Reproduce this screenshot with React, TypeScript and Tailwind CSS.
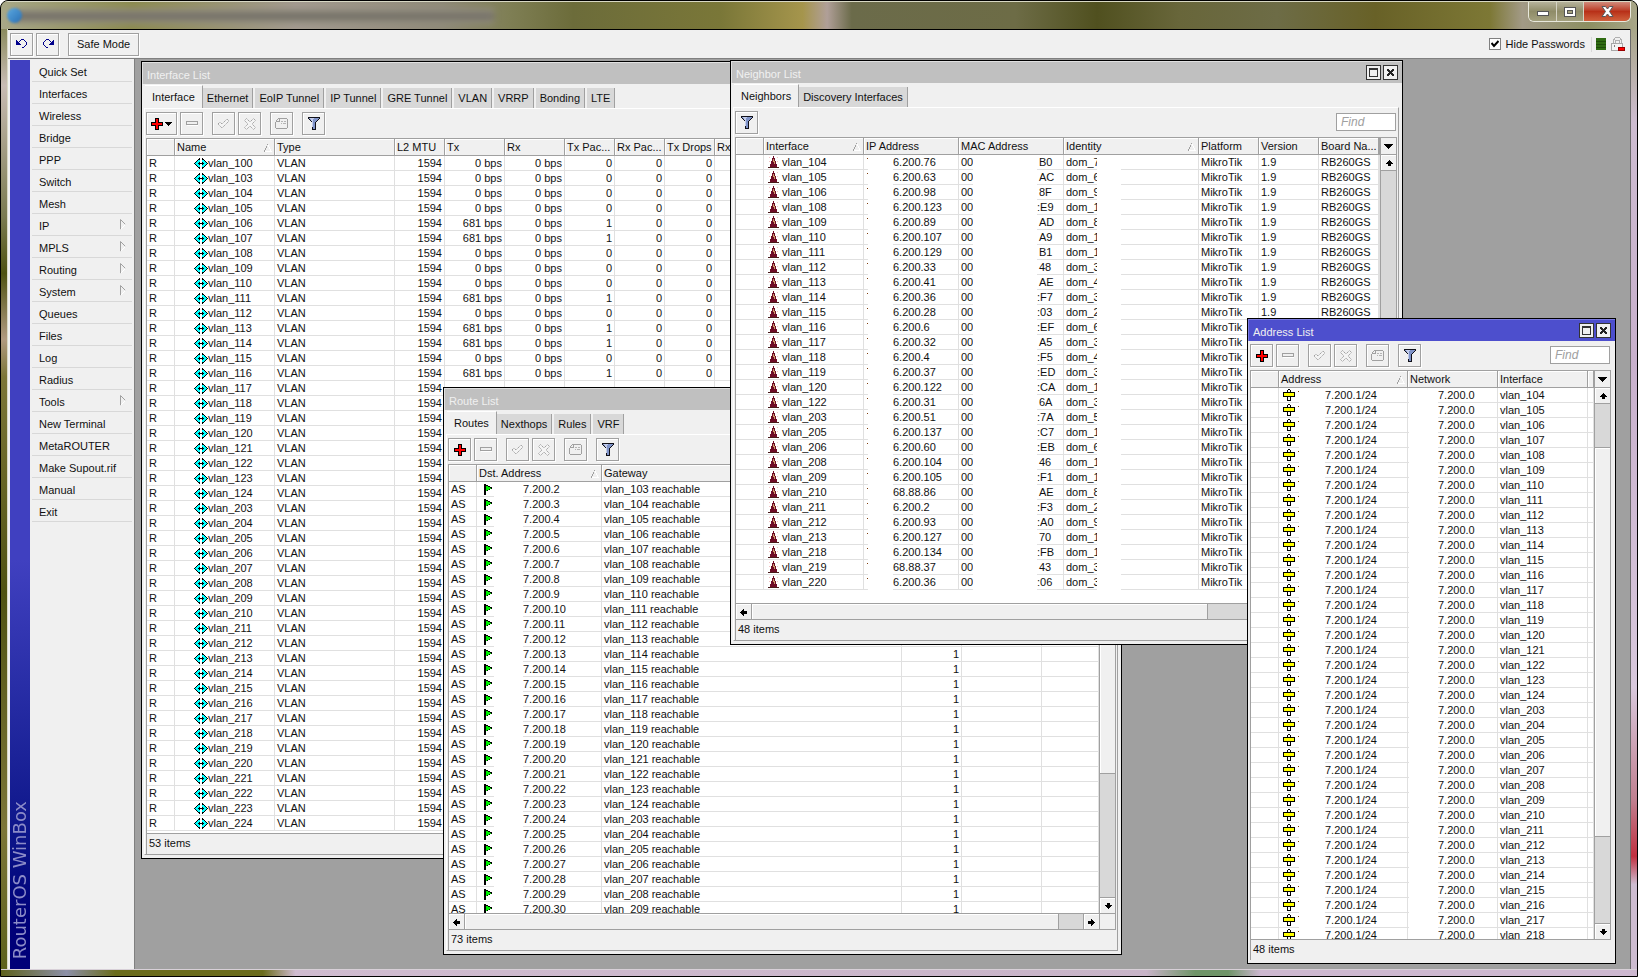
import React from 'react';

type Align = 'left' | 'right';

interface Column {
  title: string;
  width?: number;
  align?: Align;
  sort?: boolean;
}

const range = (from: number, to: number) =>
  Array.from({ length: to - from + 1 }, (_, i) => from + i);

const MENU = [
  { label: 'Quick Set' },
  { label: 'Interfaces' },
  { label: 'Wireless' },
  { label: 'Bridge' },
  { label: 'PPP' },
  { label: 'Switch' },
  { label: 'Mesh' },
  { label: 'IP', sub: true },
  { label: 'MPLS', sub: true },
  { label: 'Routing', sub: true },
  { label: 'System', sub: true },
  { label: 'Queues' },
  { label: 'Files' },
  { label: 'Log' },
  { label: 'Radius' },
  { label: 'Tools', sub: true },
  { label: 'New Terminal' },
  { label: 'MetaROUTER' },
  { label: 'Make Supout.rif' },
  { label: 'Manual' },
  { label: 'Exit' },
];

const INTERFACES = [100, ...range(103, 124), ...range(203, 224)];
const BUSY = [106, 107, 111, 113, 114, 116];
const ROUTES = [...range(103, 124), ...range(203, 209)];
const ADDRESSES = [...range(104, 124), ...range(203, 218)];

// vlan, ip tail, mac tail, identity
const NEIGHBORS: [number, string, string, string][] = [
  [104, '6.200.76', 'B0', 'dom_7'],
  [105, '6.200.63', 'AC', 'dom_6'],
  [106, '6.200.98', '8F', 'dom_9'],
  [108, '6.200.123', ':E9', 'dom_1'],
  [109, '6.200.89', 'AD', 'dom_8'],
  [110, '6.200.107', 'A9', 'dom_1'],
  [111, '6.200.129', 'B1', 'dom_1'],
  [112, '6.200.33', '48', 'dom_3'],
  [113, '6.200.41', 'AE', 'dom_4'],
  [114, '6.200.36', ':F7', 'dom_3'],
  [115, '6.200.28', ':03', 'dom_2'],
  [116, '6.200.6', ':EF', 'dom_6'],
  [117, '6.200.32', 'A5', 'dom_3'],
  [118, '6.200.4', ':F5', 'dom_4'],
  [119, '6.200.37', ':ED', 'dom_3'],
  [120, '6.200.122', ':CA', 'dom_1'],
  [122, '6.200.31', '6A', 'dom_3'],
  [203, '6.200.51', ':7A', 'dom_5'],
  [205, '6.200.137', ':C7', 'dom_1'],
  [206, '6.200.60', ':EB', 'dom_6'],
  [208, '6.200.104', '46', 'dom_1'],
  [209, '6.200.105', ':F1', 'dom_1'],
  [210, '68.88.86', 'AE', 'dom_8'],
  [211, '6.200.2', ':F3', 'dom_2'],
  [212, '6.200.93', ':A0', 'dom_9'],
  [213, '6.200.127', '70', 'dom_1'],
  [218, '6.200.134', ':FB', 'dom_1'],
  [219, '68.88.37', '43', 'dom_3'],
  [220, '6.200.36', ':06', 'dom_3'],
];

/* ---------- icons ---------- */

const svgProps = { shapeRendering: 'crispEdges' as const, 'aria-hidden': true, className: 'block shrink-0' };

const UndoIcon = ({ flip = false }: { flip?: boolean }) => (
  <svg {...svgProps} width="12" height="10" viewBox="0 0 12 10" className={flip ? 'block -scale-x-100' : 'block'}>
    <path d="M0 1h1v5h-1zM1 2h1v4h-1zM2 3h1v3h-1zM3 4h1v2h-1zM4 5h1v1h-1zM3 2h1v1h-1zM4 1h1v1h-1zM5 0h3v1h-3zM8 1h1v1h-1zM9 2h1v1h-1zM10 3h1v3h-1zM9 6h1v1h-1zM8 7h1v1h-1zM6 8h2v1h-2z" fill="#00008b" />
  </svg>
);

const PlusIcon = () => (
  <svg {...svgProps} width="12" height="12" viewBox="0 0 12 12">
    <path d="M4 0h4v4h4v4h-4v4h-4v-4h-4v-4h4z" fill="#000" />
    <path d="M5 1h2v4h4v2h-4v4h-2v-4h-4v-2h4z" fill="#f00" />
  </svg>
);

const MinusIcon = () => (
  <svg {...svgProps} width="12" height="5" viewBox="0 0 12 5">
    <rect x="0.5" y="0.5" width="11" height="3" fill="#f0f0f0" stroke="#a0a0a0" />
    <path d="M1 4h11v1h-11z" fill="#fff" />
  </svg>
);

const CheckIcon = () => (
  <svg width="13" height="11" viewBox="0 0 13 11" aria-hidden="true">
    <path d="M1 6l2-2 2 2 5-5 2 2-7 7z" fill="#f4f4f4" stroke="#a0a0a0" strokeDasharray="1.4 0.7" />
  </svg>
);

const CrossIcon = () => (
  <svg width="12" height="12" viewBox="0 0 12 12" aria-hidden="true">
    <path d="M2.500 0.500l3.500 3.500 3.500-3.500 2 2-3.500 3.500 3.500 3.500-2 2-3.500-3.500-3.500 3.500-2-2 3.500-3.500-3.500-3.500z" fill="#f4f4f4" stroke="#a0a0a0" strokeDasharray="1.400 0.700" />
  </svg>
);

const NoteIcon = () => (
  <svg {...svgProps} width="13" height="11" viewBox="0 0 13 11">
    <path d="M4 0h8v1h-8zM12 1h1v9h-1zM1 10h11v1h-11zM0 4h1v6h-1zM1 3h3v1h-3zM4 1h1v3h-1zM1 2h1v1h-1zM2 1h1v1h-1zM3 0h1v1h-1z" fill="#a0a0a0" />
    <path d="M6 3h2v1h-2zM9 3h2v1h-2zM6 5h1v1h-1zM8 5h3v1h-3z" fill="#b4b4b4" />
  </svg>
);

const FilterIcon = () => (
  <svg {...svgProps} width="12" height="13" viewBox="0 0 12 13">
    <path d="M0 0h12v2h-1v1h-1v1h-1v1h-1v8h-4v-8h-1v-1h-1v-1h-1v-1h-1z" fill="#101018" />
    <path d="M1 1h10v1h-1v1h-1v1h-1v1h-1v7h-2v-7h-1v-1h-1v-1h-1v-1h-1z" fill="#7f93c8" />
    <path d="M2 1h4v1h-1v8h-1v-6h-1v-2h-1z" fill="#c3cdeb" />
  </svg>
);

const VlanIcon = () => (
  <svg {...svgProps} width="14" height="11" viewBox="0 0 14 11">
    <path d="M5 0h1v11h-1v-1h-1v-1h-1v-1h-1v-1h-1v-1h-1v-1h1v-1h1v-1h1v-1h1v-1h1z" fill="#000" />
    <path d="M9 0h-1v11h1v-1h1v-1h1v-1h1v-1h1v-1h1v-1h-1v-1h-1v-1h-1v-1h-1v-1h-1z" fill="#000" />
    <path d="M5 2v7h-1v-1h-1v-1h-1v-1h-1v-1h1v-1h1v-1h1v-1zM9 2v7h1v-1h1v-1h1v-1h1v-1h-1v-1h-1v-1h-1v-1z" fill="#0ff" />
    <path d="M5 2h1v2h-1zM5 7h1v2h-1zM8 2h1v2h-1zM8 7h1v2h-1z" fill="#0ff" />
    <path d="M4 5h6v1h-6z" fill="#000" />
  </svg>
);

const NeighborIcon = () => (
  <svg {...svgProps} width="11" height="12" viewBox="0 0 11 12">
    <path d="M5 0h1v2h1v3h1v3h1v3h-7v-3h1v-3h1v-3h1z" fill="#6e0b26" />
    <path d="M0 11h11v1h-11z" fill="#4a1a1a" />
    <path d="M5 3h1v3h-1zM6 5h1v3h-1z" fill="#d09a6a" />
    <path d="M1 1h1v1h-1zM9 1h1v1h-1zM1 5h1v1h-1zM9 5h1v1h-1z" fill="#f3c4c4" />
  </svg>
);

const FlagIcon = () => (
  <svg {...svgProps} width="8" height="11" viewBox="0 0 8 11">
    <path d="M0 0h2v1h2v1h2v1h2v2h-2v1h-2v1h-2v4h-2z" fill="#000" />
    <path d="M2 2h1v1h2v1h2v1h-2v1h-2v1h-1z" fill="#00f000" />
    <path d="M2 2h2v1h-2zM2 3h4v2h-4zM2 5h2v1h-2z" fill="#00f000" />
  </svg>
);

const AddressIcon = () => (
  <svg {...svgProps} width="12" height="12" viewBox="0 0 12 12">
    <path d="M5 0h2v1h1v2h4v5h-4v4h-4v-4h-4v-5h4v-2h1z" fill="#000" />
    <path d="M1 4h10v3h-10z" fill="#ff0" />
    <path d="M5 1h2v2h-2zM5 8h2v3h-2z" fill="#fff" />
  </svg>
);

const ARROWS = {
  up: 'M4 0h1v1h1v1h1v1h1v1h-2v2h-3v-2h-2v-1h1v-1h1v-1h1z',
  down: 'M3 0h3v2h2v1h-1v1h-1v1h-1v1h-1v-1h-1v-1h-1v-1h-1v-1h2z',
  left: 'M0 3h1v-1h1v-1h1v-1h1v2h3v3h-3v2h-1v-1h-1v-1h-1v-1h-1z',
  right: 'M7 3h-1v-1h-1v-1h-1v-1h-1v2h-3v3h3v2h1v-1h1v-1h1v-1h1z',
  menu: 'M0 1h9v1h-1v1h-1v1h-1v1h-1v1h-1v-1h-1v-1h-1v-1h-1v-1h-1z',
};

const Arrow = ({ dir }: { dir: keyof typeof ARROWS }) => (
  <svg {...svgProps} width="9" height="7" viewBox="0 0 9 7">
    <path d={ARROWS[dir]} fill="#000" />
  </svg>
);

/* ---------- shared controls ---------- */

const ToolButton: React.FC<{ label: string; wide?: boolean; className?: string; children: React.ReactNode }> = ({
  label,
  wide,
  className = '',
  children,
}) => (
  <button
    type="button"
    aria-label={label}
    className={`flex h-[23px] shrink-0 items-center justify-center border border-[#a0a0a0] bg-[#f0f0f0] shadow-[1px_1px_0_#fff,inset_1px_1px_0_#fff] ${wide ? 'w-[31px]' : 'w-[23px]'} ${className}`}
  >
    {children}
  </button>
);

const Toolbar: React.FC<{ edit?: boolean; menu?: boolean; find?: string }> = ({ edit, menu, find }) => (
  <div className="flex h-[29px] shrink-0 items-start pt-[3px]">
    {edit && (
      <>
        <ToolButton label="Add" wide={menu} className="mr-[3px]">
          <PlusIcon />
          {menu && (
            <svg {...svgProps} width="9" height="4" viewBox="0 0 9 4">
              <path d="M2 0h7v1h-1v1h-1v1h-1v1h-1v-1h-1v-1h-1v-1h-1z" fill="#000" />
            </svg>
          )}
        </ToolButton>
        <ToolButton label="Remove" className="mr-[9px]"><MinusIcon /></ToolButton>
        <ToolButton label="Enable" className="mr-[3px]"><CheckIcon /></ToolButton>
        <ToolButton label="Disable" className="mr-[9px]"><CrossIcon /></ToolButton>
        <ToolButton label="Comment" className="mr-[9px]"><NoteIcon /></ToolButton>
      </>
    )}
    <ToolButton label="Filter"><FilterIcon /></ToolButton>
    {find && (
      <input
        type="text"
        aria-label={find}
        placeholder="Find"
        className="mt-[2px] mr-px ml-auto h-[18px] w-[60px] border border-[#a0a0a0] bg-white px-1 text-[12px] italic outline-none placeholder:text-[#a0a0a0]"
      />
    )}
  </div>
);

const Tabs: React.FC<{ items: string[] }> = ({ items }) => (
  <div className="flex h-[24px] shrink-0 items-end gap-[2px] pl-[3px]">
    {items.map((tab, i) => (
      <button
        key={tab}
        type="button"
        className={
          i === 0
            ? '-mr-[2px] flex h-[23px] items-start border-t border-r border-t-white border-r-[#a0a0a0] bg-[#f0f0f0] px-[7px] pt-px leading-[20px]'
            : 'h-[20px] border-r border-[#a0a0a0] bg-[#d8d8d8] px-[4px] pt-px leading-[19px]'
        }
      >
        {tab}
      </button>
    ))}
  </div>
);

const ScrollButton: React.FC<{ dir: 'up' | 'down' | 'left' | 'right' }> = ({ dir }) => (
  <button
    type="button"
    aria-label={`Scroll ${dir}`}
    className="flex size-[15px] shrink-0 items-center justify-center bg-[#f0f0f0] pt-[2px] pl-px shadow-[inset_1px_1px_0_#fff]"
  >
    <Arrow dir={dir} />
  </button>
);

/* Vertical bar: the gap before the thumb and the thumb itself are given in pixels */
const VScroll: React.FC<{ before: number; thumb: number }> = ({ before, thumb }) => (
  <div className="flex w-[17px] shrink-0 flex-col border-x border-[#a0a0a0] bg-[#d8d8d8]">
    <button type="button" aria-label="Columns" className="flex h-[17px] shrink-0 items-center justify-center border-b border-[#a0a0a0] bg-[#f0f0f0]">
      <Arrow dir="menu" />
    </button>
    <ScrollButton dir="up" />
    <div className="min-h-0 flex-1 border-y border-[#a0a0a0]">
      <div style={{ height: before }} />
      {thumb > 0 && (
        <div className="border-y border-[#a0a0a0] bg-[#f0f0f0] shadow-[inset_1px_1px_0_#fff]" style={{ height: thumb }} />
      )}
    </div>
    <ScrollButton dir="down" />
  </div>
);

const HScroll: React.FC<{ thumb: number; corner?: boolean }> = ({ thumb, corner }) => (
  <div className="flex h-[16px] shrink-0 border-t border-r border-[#a0a0a0] bg-[#d8d8d8]">
    <ScrollButton dir="left" />
    <div className="min-w-0 flex-1 border-x border-[#a0a0a0]">
      <div className="h-full border-r border-[#a0a0a0] bg-[#f0f0f0] shadow-[inset_1px_1px_0_#fff]" style={{ width: thumb }} />
    </div>
    <ScrollButton dir="right" />
    {corner && <div className="w-[16px] border-l border-[#a0a0a0] bg-[#f0f0f0]" />}
  </div>
);

const Grid: React.FC<{ columns: Column[]; rows: React.ReactNode[][]; children?: React.ReactNode }> = ({
  columns,
  rows,
  children,
}) => (
  <div className="relative min-w-0 flex-1 overflow-hidden bg-white">
    <table className="w-full table-fixed border-separate border-spacing-0">
      <colgroup>
        {columns.map((c, i) => (
          <col key={i} style={c.width ? { width: c.width } : undefined} />
        ))}
      </colgroup>
      <thead>
        <tr className="h-[17px]">
          {columns.map((c, i) => (
            <th key={i} className="border-r border-b border-[#a0a0a0] bg-[#f0f0f0] p-0 text-left font-normal shadow-[inset_1px_1px_0_#fff]">
              <div className="flex h-[16px] items-center justify-between overflow-hidden px-[2px] pt-px leading-[15px] whitespace-nowrap">
                {c.title}
                {c.sort && (
                  <svg {...svgProps} width="8" height="8" viewBox="0 0 8 8">
                    <path d="M3 0h1v1h-1zM2 2h1v2h-1zM1 4h1v2h-1zM0 6h1v2h-1z" fill="#a0a0a0" />
                    <path d="M4 1h1v2h-1zM5 3h1v2h-1zM6 5h1v2h-1zM1 7h7v1h-7z" fill="#fff" />
                  </svg>
                )}
              </div>
            </th>
          ))}
        </tr>
      </thead>
      <tbody>
        {rows.map((cells, r) => (
          <tr key={r} className="h-[15px]">
            {columns.map((c, i) => (
              <td key={i} className="border-r border-b border-[#e0e0e0] p-0">
                <div
                  className={`flex h-[14px] items-center overflow-hidden px-[2px] leading-[14px] whitespace-pre ${c.align === 'right' ? 'justify-end' : ''}`}
                >
                  {cells[i]}
                </div>
              </td>
            ))}
          </tr>
        ))}
      </tbody>
    </table>
    {children}
  </div>
);

const Window: React.FC<{
  title: string;
  className: string;
  active?: boolean;
  tabs?: string[];
  buttons?: boolean;
  items: number;
  children: React.ReactNode;
}> = ({ title, className, active, tabs, buttons, items, children }) => (
  <section className={`absolute flex flex-col border border-black bg-[#f0f0f0] ${className}`}>
    <header
      className={`flex h-[22px] shrink-0 items-center justify-between border-t border-l pr-[4px] pl-1 text-[#f0f0f0] ${
        active ? 'border-[#7a7ae0] bg-[#4d4fcd]' : 'border-[#e0e0e0] bg-[#c0c0c0]'
      }`}
    >
      <h2 className="pt-[3px]">{title}</h2>
      {buttons && (
        <div className="flex gap-[2px]">
          <button type="button" aria-label={`Maximize ${title}`} className="flex size-[15px] items-center justify-center border border-[#333] bg-[#f0f0f0]">
            <span className="size-[9px] border border-t-2 border-[#333]" />
          </button>
          <button type="button" aria-label={`Close ${title}`} className="flex size-[15px] items-center justify-center border border-[#333] bg-[#f0f0f0]">
            <svg {...svgProps} width="7" height="7" viewBox="0 0 7 7">
              <path d="M0 0h2v1h1v1h1v-1h1v-1h2v2h-1v1h-1v1h1v1h1v2h-2v-1h-1v-1h-1v1h-1v1h-2v-2h1v-1h1v-1h-1v-1h-1z" fill="#222" />
            </svg>
          </button>
        </div>
      )}
    </header>
    {tabs && <Tabs items={tabs} />}
    <div
      className={`flex min-h-0 flex-1 flex-col ${
        tabs ? 'mr-[3px] mb-[3px] ml-[2px] border border-t-white border-r-[#a0a0a0] border-b-[#a0a0a0] border-l-white px-px' : 'mr-[4px] mb-[3px] ml-[2px]'
      }`}
    >
      {children}
      <footer className="h-[20px] shrink-0 border-l border-[#a0a0a0] pl-[2px] leading-[19px]">{items} items</footer>
    </div>
  </section>
);

/* ---------- windows ---------- */

const InterfaceList = () => (
  <Window
    title="Interface List"
    className="top-[2px] left-[6px] h-[798px] w-[900px]"
    tabs={['Interface', 'Ethernet', 'EoIP Tunnel', 'IP Tunnel', 'GRE Tunnel', 'VLAN', 'VRRP', 'Bonding', 'LTE']}
    items={53}
  >
    <Toolbar edit menu />
    <div className="flex min-h-0 flex-1 border-y border-l border-[#a0a0a0]">
      <Grid
        columns={[
          { title: '', width: 28 },
          { title: 'Name', width: 100, sort: true },
          { title: 'Type', width: 120 },
          { title: 'L2 MTU', width: 50, align: 'right' },
          { title: 'Tx', width: 60, align: 'right' },
          { title: 'Rx', width: 60, align: 'right' },
          { title: 'Tx Pac...', width: 50, align: 'right' },
          { title: 'Rx Pac...', width: 50, align: 'right' },
          { title: 'Tx Drops', width: 50, align: 'right' },
          { title: 'Rx' },
        ]}
        rows={INTERFACES.map((n) => {
          const busy = BUSY.includes(n);
          const traffic = [busy ? '681 bps' : '0 bps', '0 bps', busy ? '1' : '0', '0', '0'];
          return [
            'R',
            <span className="flex items-center pl-[17px]"><VlanIcon />{`vlan_${n}`}</span>,
            'VLAN',
            '1594',
            ...(n < 117 ? traffic : []),
          ];
        })}
      />
    </div>
  </Window>
);

const RouteList = () => (
  <Window
    title="Route List"
    className="top-[328px] left-[308px] h-[568px] w-[679px]"
    tabs={['Routes', 'Nexthops', 'Rules', 'VRF']}
    items={73}
  >
    <Toolbar edit />
    <div className="flex min-h-0 flex-1 flex-col border-y border-l border-[#a0a0a0]">
      <div className="flex min-h-0 flex-1">
        <Grid
          columns={[
            { title: '', width: 28 },
            { title: 'Dst. Address', width: 125, sort: true },
            { title: 'Gateway', width: 300 },
            { title: '', width: 60, align: 'right' },
            { title: '', width: 80 },
            { title: '' },
          ]}
          rows={ROUTES.map((n, i) => [
            'AS',
            <span className="flex items-center gap-[31px] pl-[5px]"><FlagIcon />{`7.200.${i + 2}`}</span>,
            `vlan_${n} reachable`,
            n > 113 ? '1' : '',
          ])}
        >
          <div className="absolute top-[17px] bottom-0 left-[45px] w-[29px] bg-white" />
        </Grid>
        <VScroll before={0} thumb={276} />
      </div>
      <HScroll thumb={594} corner />
    </div>
  </Window>
);

const NeighborList = () => (
  <Window
    title="Neighbor List"
    className="top-[1px] left-[595px] h-[585px] w-[673px]"
    tabs={['Neighbors', 'Discovery Interfaces']}
    items={48}
    buttons
  >
    <Toolbar find="Find neighbor" />
    <div className="flex min-h-0 flex-1 flex-col border-y border-l border-[#a0a0a0]">
      <div className="flex min-h-0 flex-1">
        <Grid
          columns={[
            { title: '', width: 28 },
            { title: 'Interface', width: 100, sort: true },
            { title: 'IP Address', width: 95 },
            { title: 'MAC Address', width: 105 },
            { title: 'Identity', width: 135, sort: true },
            { title: 'Platform', width: 60 },
            { title: 'Version', width: 60 },
            { title: 'Board Na...', width: 60 },
            { title: '' },
          ]}
          rows={NEIGHBORS.map(([n, ip, mac, identity], i) => [
            '',
            <span className="flex items-center gap-[3px] pl-[2px]"><NeighborIcon />{`vlan_${n}`}</span>,
            <span className="flex items-center gap-[25px] pl-px"><i className="mb-[7px] size-px bg-[#804010]" />{ip}</span>,
            <span className="flex">
              <span className="w-[12px]">00</span>
              <span className={mac.startsWith(':') ? 'pl-[64px]' : 'pl-[66px]'}>{mac}</span>
            </span>,
            <span className="w-[31px] overflow-hidden">{identity}</span>,
            'MikroTik',
            i < 11 ? '1.9' : '',
            i < 11 ? 'RB260GS' : '',
          ])}
        >
          <div className="absolute top-[17px] bottom-0 left-[132px] w-[25px] bg-white" />
          <div className="absolute top-[17px] bottom-0 left-[237px] w-[64px] bg-white" />
          <div className="absolute top-[17px] bottom-0 left-[361px] w-[24px] bg-white" />
        </Grid>
        <VScroll before={600} thumb={0} />
      </div>
      <HScroll thumb={456} />
    </div>
  </Window>
);

const AddressList = () => (
  <Window title="Address List" className="top-[259px] left-[1112px] h-[646px] w-[369px]" active buttons items={48}>
    <Toolbar edit find="Find address" />
    <div className="flex min-h-0 flex-1 border-y border-l border-[#a0a0a0]">
      <Grid
        columns={[
          { title: '', width: 28 },
          { title: 'Address', width: 129, sort: true },
          { title: 'Network', width: 90 },
          { title: 'Interface', width: 90 },
          { title: '' },
        ]}
        rows={ADDRESSES.map((n) => [
          '',
          <span className="flex items-center gap-[3px] pl-[2px]">
            <AddressIcon />
            <i className="mb-[7px] size-px bg-[#804010]" />
            <span className="pl-[23px]">7.200.1/24</span>
          </span>,
          <span className="pl-[28px]">7.200.0</span>,
          `vlan_${n}`,
        ])}
      >
        <div className="absolute top-[17px] bottom-0 left-[48px] w-[26px] bg-white" />
        <div className="absolute top-[17px] bottom-0 left-[158px] w-[29px] bg-white" />
      </Grid>
      <VScroll before={43} thumb={390} />
    </div>
  </Window>
);

const Sidebar = () => (
  <aside className="flex w-[127px] shrink-0 border-r border-[#808080] bg-[#f0f0f0] pt-px pl-[2px]">
    <div className="flex w-[20px] items-end justify-center bg-linear-to-b from-[#4040c0] from-55% to-[#000078] to-95% pb-[10px]">
      <span className="rotate-180 [writing-mode:vertical-rl] font-['DejaVu_Sans'] text-[18px] leading-[20px] whitespace-nowrap text-[#8c8cc8]">
        RouterOS WinBox
      </span>
    </div>
    <nav className="ml-[2px] w-[100px]">
      {MENU.map((item) => (
        <a key={item.label} href="#" className="flex h-[22px] items-center justify-between border-b border-[#d8d8d8] pt-[4px] pr-[6px] pl-[7px] whitespace-nowrap">
          {item.label}
          {item.sub && (
            <svg width="6" height="11" viewBox="0 0 6 11" aria-hidden="true" className="mb-[5px]">
              <path d="M0.500 10.500v-10l5 5" fill="none" stroke="#a0a0a0" />
              <path d="M0.500 10.500l5-5" stroke="#fff" />
            </svg>
          )}
        </a>
      ))}
    </nav>
  </aside>
);

const TitleBar = () => (
  <div className="flex h-[28px] shrink-0 justify-between overflow-hidden border-t border-[#d8d8c4] bg-[linear-gradient(90deg,#a8a888_0%,#8c8b50_8%,#a39a90_18%,#8f8a78_27%,#7f7f55_31%,#6c6c3a_35%,#7a7738_44%,#a5954c_49%,#b09f98_50.5%,#6b6b4a_52%,#6d6c46_62%,#50501f_67%,#68663a_72%,#6d6c46_78%,#686127_84%,#7d7835_91%,#a29a86_93%,#8d8f62_97%,#a8a688_100%)] pl-[6px]">
    <div className="flex items-center">
      <span className="z-10 size-[15px] rounded-full bg-linear-to-br from-[#5ba8e0] to-[#2a70b4] blur-[1px]" />
      <span className="-ml-[8px] h-[14px] w-[480px] bg-linear-to-b from-[#a09b8c] via-[#6a665e] to-[#9c9788] blur-[3px]" />
    </div>
    <div className="mr-[6px] flex h-[20px] overflow-hidden rounded-b-md border border-t-0 border-[#e8e8dc]">
      <button type="button" aria-label="Minimize" className="flex w-[28px] items-center justify-center border-r border-[#d5d3c4] bg-linear-to-b from-[#b5b29a] via-[#8f8c68] to-[#a3a07e]">
        <span className="mt-1 h-[5px] w-[12px] border border-[#555] bg-white" />
      </button>
      <button type="button" aria-label="Restore" className="flex w-[27px] items-center justify-center border-r border-[#d5d3c4] bg-linear-to-b from-[#b5b29a] via-[#8f8c68] to-[#a3a07e]">
        <span className="flex h-[10px] w-[12px] items-center justify-center border border-[#555] bg-white">
          <span className="h-[4px] w-[6px] border border-[#555] bg-[#a3a07e]" />
        </span>
      </button>
      <button type="button" aria-label="Close" className="flex w-[46px] items-center justify-center bg-linear-to-b from-[#d08a7a] via-[#b83018] to-[#d0603c]">
        <svg width="13" height="11" viewBox="0 0 13 11" aria-hidden="true">
          <path d="M1 0.500h3.500l2 2.500 2-2.500h3.500l-3.500 5 3.500 5h-3.500l-2-2.500-2 2.500h-3.500l3.500-5z" fill="#fff" stroke="#55585c" />
        </svg>
      </button>
    </div>
  </div>
);

const App: React.FC = () => {
  return (
    <div className="flex h-screen flex-col overflow-hidden rounded-t-lg border border-black bg-[#565a20] font-['Liberation_Sans',Arial,sans-serif] text-[11px] text-[#111]">
      <TitleBar />

      <div className="flex min-h-0 flex-1">
        {/* Left glass edge */}
        <div className="w-[7px] shrink-0 border-r border-[#d8d8c4] bg-[linear-gradient(180deg,#8a8a5e_0%,#c8bcb4_6%,#7a7a50_20%,#4f5212_26%,#b09a80_33%,#7c7638_37%,#4f5212_60%,#7c7638_85%,#5d611c_100%)]" />

        <div className="flex min-w-0 flex-1 flex-col border-t border-black bg-[#a0a0a0]">
          {/* Main toolbar */}
          <div className="flex h-[29px] shrink-0 items-center border-b border-[#808080] bg-[#f0f0f0] pr-[5px] pl-[2px]">
            <ToolButton label="Undo" className="mr-[3px]"><UndoIcon /></ToolButton>
            <ToolButton label="Redo" className="mr-[9px]"><UndoIcon flip /></ToolButton>
            <button type="button" className="h-[23px] border border-[#a0a0a0] px-[8px] leading-[21px] shadow-[1px_1px_0_#fff,inset_1px_1px_0_#fff]">
              Safe Mode
            </button>
            <label className="ml-auto flex items-center gap-[5px]">
              <span className="relative flex size-[12px]">
                <input type="checkbox" defaultChecked className="peer size-[12px] appearance-none border border-[#808080] bg-white" />
                <svg width="8" height="8" viewBox="0 0 8 8" aria-hidden="true" className="pointer-events-none absolute top-[2px] left-[2px] hidden peer-checked:block">
                  <path d="M0.500 3l2.500 3 4.500-5" fill="none" stroke="#000" strokeWidth="2" />
                </svg>
              </span>
              Hide Passwords
            </label>
            <div className="ml-[6px] flex items-center gap-[5px] border-l border-[#d8d8d8] pl-1">
              <svg {...svgProps} width="10" height="12" viewBox="0 0 10 12">
                <path d="M0 0h10v12h-10z" fill="#2f6b12" />
                <path d="M0 3h10v1h-10zM0 6h10v1h-10zM0 9h10v1h-10z" fill="#1f4d0a" />
              </svg>
              <svg {...svgProps} width="14" height="15" viewBox="0 0 14 15">
                <path d="M2.500 6v-3l2-2.500h4l2 2.500v3M4.500 6v-3h4v3" fill="none" stroke="#b0b0b0" />
                <path d="M0.500 6.500h11v7h-11z" fill="#f4f4f4" stroke="#a8a8a8" />
                <path d="M3 8h1v2h-1z" fill="#808080" />
                <path d="M7 10h6v3h-6z" fill="#f00" stroke="#900" />
              </svg>
            </div>
          </div>

          <div className="flex min-h-0 flex-1">
            <Sidebar />
            <main className="relative min-w-0 flex-1 overflow-hidden bg-[#a0a0a0]">
              <InterfaceList />
              <RouteList />
              <NeighborList />
              <AddressList />
            </main>
          </div>
        </div>

        {/* Right glass edge */}
        <div className="w-[7px] shrink-0 border-l border-[#6a6a6a] bg-[linear-gradient(180deg,#a8a688_0%,#cdbcd0_10%,#c8b0cc_35%,#d8c8dc_70%,#c08090_82%,#c03040_88%,#cdbcd0_91%,#cdbcd0_100%)]" />
      </div>

      {/* Bottom glass edge */}
      <div className="h-[7px] shrink-0 border-t border-[#d8d0d8] bg-[linear-gradient(90deg,#5d611c_0%,#8c90a8_4%,#6a6c1c_7%,#6a6c1c_16%,#d0bcd0_18%,#c8b4c8_70%,#6f9468_73%,#6f9468_75%,#cdb8d0_77%,#cdb8d0_100%)]" />
    </div>
  );
};

export default App;
